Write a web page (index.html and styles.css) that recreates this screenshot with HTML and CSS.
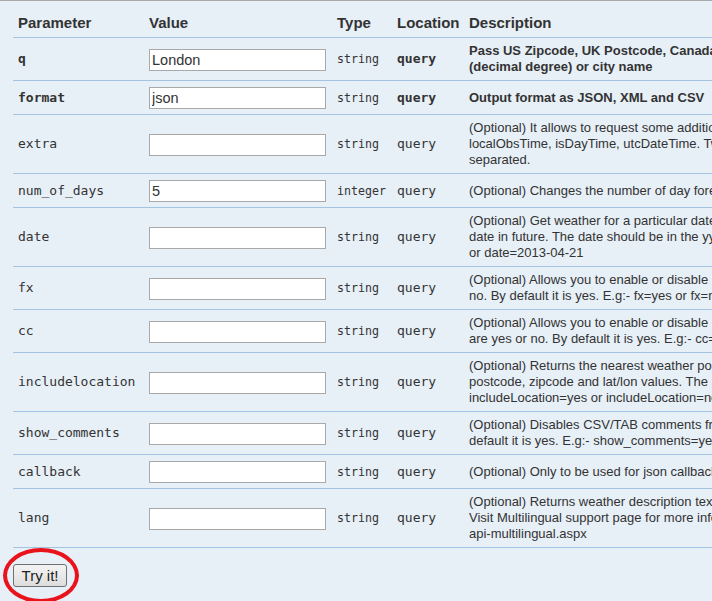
FILE: index.html
```html
<!DOCTYPE html>
<html>
<head>
<meta charset="utf-8">
<link rel="stylesheet" href="styles.css">
</head>
<body>
<div class="page">
  <div class="clip">
    <table class="params">
      <colgroup>
        <col class="c-param"><col class="c-value"><col class="c-type"><col class="c-loc"><col class="c-desc">
      </colgroup>
      <thead>
        <tr><th>Parameter</th><th>Value</th><th>Type</th><th>Location</th><th>Description</th></tr>
      </thead>
      <tbody>
        <tr class="req">
          <td class="name">q</td><td><input class="field" type="text" value="London"></td><td class="type">string</td><td class="loc">query</td>
          <td class="desc">Pass US Zipcode, UK Postcode, Canada Postalcode, IP address, Latitude and Longitude<br>(decimal degree) or city name</td>
        </tr>
        <tr class="req">
          <td class="name">format</td><td><input class="field" type="text" value="json"></td><td class="type">string</td><td class="loc">query</td>
          <td class="desc">Output format as JSON, XML and CSV</td>
        </tr>
        <tr>
          <td class="name">extra</td><td><input class="field" type="text"></td><td class="type">string</td><td class="loc">query</td>
          <td class="desc">(Optional) It allows to request some additional information in the feed return. Possible values are<br>localObsTime, isDayTime, utcDateTime. Two or more values can be passed as comma<br>separated.</td>
        </tr>
        <tr>
          <td class="name">num_of_days</td><td><input class="field" type="text" value="5"></td><td class="type">integer</td><td class="loc">query</td>
          <td class="desc">(Optional) Changes the number of day forecast you need.</td>
        </tr>
        <tr>
          <td class="name">date</td><td><input class="field" type="text"></td><td class="type">string</td><td class="loc">query</td>
          <td class="desc">(Optional) Get weather for a particular date within next 5 days. Date should be today or a<br>date in future. The date should be in the yyyy-MM-dd format. E.g.:- date=today or date=tomorrow<br>or date=2013-04-21</td>
        </tr>
        <tr>
          <td class="name">fx</td><td><input class="field" type="text"></td><td class="type">string</td><td class="loc">query</td>
          <td class="desc">(Optional) Allows you to enable or disable normal weather output. The possible values are yes or<br>no. By default it is yes. E.g:- fx=yes or fx=no</td>
        </tr>
        <tr>
          <td class="name">cc</td><td><input class="field" type="text"></td><td class="type">string</td><td class="loc">query</td>
          <td class="desc">(Optional) Allows you to enable or disable current weather conditions output. The possible values<br>are yes or no. By default it is yes. E.g:- cc=yes or cc=no</td>
        </tr>
        <tr>
          <td class="name">includelocation</td><td><input class="field" type="text"></td><td class="type">string</td><td class="loc">query</td>
          <td class="desc">(Optional) Returns the nearest weather point for which the weather data is returned for a given<br>postcode, zipcode and lat/lon values. The possible values are yes or no. By default it is no. E.g:-<br>includeLocation=yes or includeLocation=no</td>
        </tr>
        <tr>
          <td class="name">show_comments</td><td><input class="field" type="text"></td><td class="type">string</td><td class="loc">query</td>
          <td class="desc">(Optional) Disables CSV/TAB comments from the output. The possible values are yes or no. By<br>default it is yes. E.g:- show_comments=yes or show_comments=no</td>
        </tr>
        <tr>
          <td class="name">callback</td><td><input class="field" type="text"></td><td class="type">string</td><td class="loc">query</td>
          <td class="desc">(Optional) Only to be used for json callback feature.</td>
        </tr>
        <tr>
          <td class="name">lang</td><td><input class="field" type="text"></td><td class="type">string</td><td class="loc">query</td>
          <td class="desc">(Optional) Returns weather description text in the language of your choice.<br>Visit Multilingual support page for more info. Endpoint: http://www.worldweatheronline.com/<br>api-multilingual.aspx</td>
        </tr>
      </tbody>
    </table>
  </div>
  <div class="actions">
    <button class="try" type="button">Try it!</button>
    <span class="ring"></span>
  </div>
</div>
</body>
</html>
```
FILE: styles.css
```css
html, body {
  margin: 0;
  padding: 0;
  background: #e7eff7;
  overflow: hidden;
}
.page {
  border-top: 1px solid #a8a8a8;
  padding-left: 13px;
  height: 600px;
  font-family: "Liberation Sans", Arial, sans-serif;
  color: #333;
}
.clip {
  overflow: hidden;
}
.params {
  border-collapse: collapse;
  table-layout: fixed;
  width: 1120px;
}
.c-param { width: 131px; }
.c-value { width: 188px; }
.c-type { width: 60px; }
.c-loc { width: 72px; }
.c-desc { width: 669px; }
.params th {
  text-align: left;
  font-size: 15px;
  font-weight: bold;
  line-height: 19px;
  padding: 12px 5px 5px;
  color: #333;
  border-bottom: 1px solid #a3c3e2;
}
.params td {
  padding: 5px 5px;
  vertical-align: middle;
  border-bottom: 1px solid #a3c3e2;
  line-height: 16px;
}
.name {
  font-family: "DejaVu Sans Mono", monospace;
  font-size: 13px;
  color: #333;
}
.type {
  font-family: "DejaVu Sans Mono", monospace;
  font-size: 11.6px;
  color: #333;
}
.loc {
  font-family: "DejaVu Sans Mono", monospace;
  font-size: 13px;
  color: #333;
}
.desc {
  font-size: 13px;
  white-space: nowrap;
  color: #333;
}
.req .name, .req .loc, .req .desc {
  font-weight: bold;
}
.field {
  display: block;
  box-sizing: border-box;
  width: 177px;
  height: 22px;
  margin: 1px 0 0;
  padding: 0 2px;
  border: 1px solid #a9a9a9;
  background: #fff;
  font-family: "Liberation Sans", Arial, sans-serif;
  font-size: 14.5px;
  color: #333;
  outline: none;
}
.actions {
  position: relative;
  padding-top: 16px;
}
.try {
  display: block;
  box-sizing: border-box;
  width: 54px;
  height: 23px;
  margin: 0;
  padding: 0;
  border: 1px solid #707070;
  border-radius: 3px;
  background: linear-gradient(#f3f3f3, #e9e9e9 50%, #dcdcdc);
  font-family: "Liberation Sans", Arial, sans-serif;
  font-size: 15px;
  color: #222;
}
.ring {
  position: absolute;
  left: -10px;
  top: 0;
  width: 76px;
  height: 55px;
  box-sizing: border-box;
  border: 4px solid #e8131b;
  border-radius: 50%;
}
```
